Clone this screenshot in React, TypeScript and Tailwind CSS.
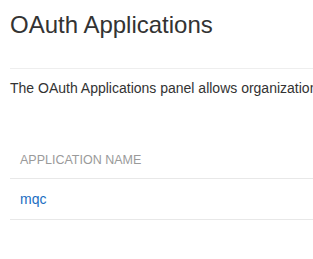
export default function App() {
  return (
    <div className="w-full h-screen overflow-hidden bg-white" style={{ fontFamily: '"Liberation Sans", Arial, sans-serif' }}>
      <div className="pl-[10px] w-[1200px]">
        <div className="pt-[12px] pb-[30px] border-b border-[#eeeeee]">
          <h1 className="text-[24px] leading-[26.4px] text-[#333333] font-normal m-0">OAuth Applications</h1>
        </div>
        <p className="mt-[9px] text-[14px] leading-[20px] text-[#333333] whitespace-nowrap">
          The OAuth Applications panel allows organizations to manage the applications that can access their data.
        </p>
        <table className="mt-[44px] w-full border-collapse">
          <thead>
            <tr className="border-b border-[#e8e8e8]">
              <th className="text-left font-normal uppercase text-[12.5px] leading-[20px] text-[#9a9a9a] px-[10px] py-[8px]">
                Application Name
              </th>
            </tr>
          </thead>
          <tbody>
            <tr className="border-b border-[#e8e8e8]">
              <td className="text-[14px] leading-[20px] px-[10px] pt-[10px] pb-[10px]">
                <a href="#" className="text-[#1b6ec2]">mqc</a>
              </td>
            </tr>
          </tbody>
        </table>
      </div>
    </div>
  );
}
